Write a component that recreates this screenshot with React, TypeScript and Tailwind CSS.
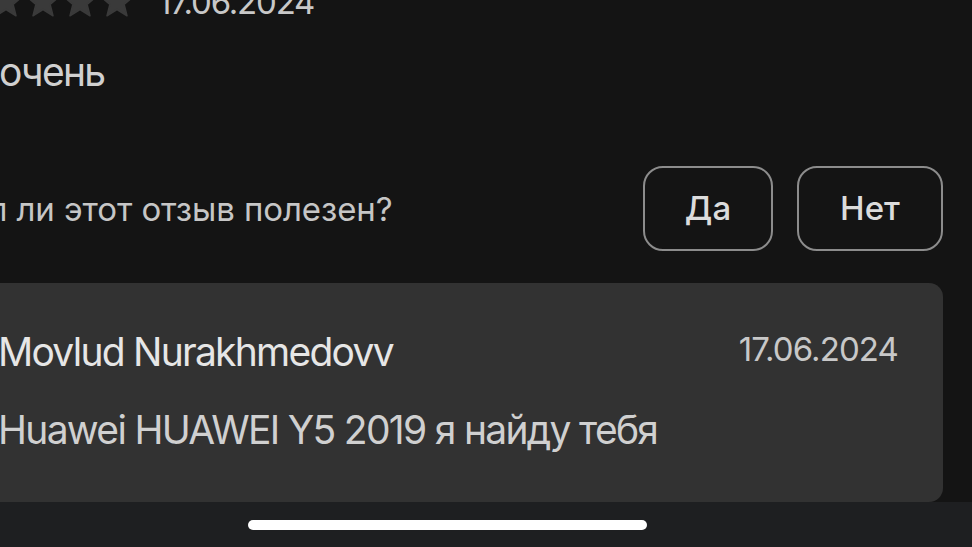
import React from 'react';

const STAR_POINTS =
  '17,0 21.41,10.93 33.17,11.75 24.13,19.32 26.99,30.75 17,24.5 7.01,30.75 9.87,19.32 0.83,11.75 12.59,10.93';

const Star = () => (
  <svg width="34" height="34" viewBox="0 0 34 34" className="shrink-0">
    <polygon points={STAR_POINTS} fill="#3a3a3a" strokeLinejoin="round" stroke="#3a3a3a" strokeWidth="1.5" />
  </svg>
);

const VoteButton = ({ label, width }: { label: string; width: string }) => (
  <button
    className={`${width} h-[85px] rounded-[20px] border-2 border-[#8c8c8c] text-[33px] font-medium leading-none text-[#dcdcdc]`}
  >
    {label}
  </button>
);

const App = () => {
  return (
    <div
      className="w-[972px] h-[547px] overflow-hidden bg-[#141414] flex flex-col"
      style={{ fontFamily: 'Inter, "Noto Sans", sans-serif' }}
    >
      <div className="h-[502px] flex flex-col pr-[29px]">
        {/* rating + date of the previous review */}
        <div className="flex items-start -mt-[18px] h-[40px]">
          <div className="flex gap-[3px] -ml-[11px] mt-[3px]">
            <Star />
            <Star />
            <Star />
            <Star />
          </div>
          <span className="ml-[24px] text-[33px] leading-[40px] tracking-[-1.2px] text-[#c8c8c8]">17.06.2024</span>
        </div>

        <p className="mt-[26px] -ml-[1px] text-[39px] leading-[48px] tracking-[-1.7px] text-[#d0d0d0]">очень</p>

        {/* helpful? */}
        <div className="mt-[70px] flex items-center justify-between">
          <p className="-ml-[57px] text-[33px] leading-[40px] tracking-[-0.1px] text-[#c6c6c6]">Был ли этот отзыв полезен?</p>
          <div className="flex gap-[24px]">
            <VoteButton label="Да" width="w-[130px]" />
            <VoteButton label="Нет" width="w-[146px]" />
          </div>
        </div>

        {/* next review card */}
        <div className="mt-[32px] h-[219px] -ml-[40px] pl-[38px] pr-[45px] pt-[45px] rounded-[14px] bg-[#323232]">
          <div className="flex items-start justify-between">
            <span className="text-[39px] leading-[48px] tracking-[-1.75px] text-[#e6e6e6]">Movlud Nurakhmedovv</span>
            <span className="mt-[1px] text-[33px] leading-[40px] tracking-[-0.9px] text-[#c8c8c8]">17.06.2024</span>
          </div>
          <p className="mt-[30px] text-[39px] leading-[48px] tracking-[-1.7px] text-[#d0d0d0]">
            Huawei HUAWEI Y5 2019 я найду тебя
          </p>
        </div>
      </div>

      {/* home indicator */}
      <div className="h-[45px] bg-[#1e1f21] pt-[18px]">
        <div className="ml-[248px] w-[399px] h-[10px] rounded-full bg-white" />
      </div>
    </div>
  );
};

export default App;
